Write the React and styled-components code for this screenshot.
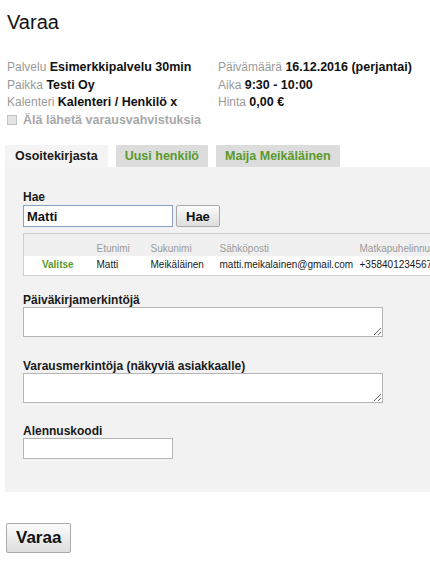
import styled, { createGlobalStyle } from "styled-components";

const GlobalStyle = createGlobalStyle`
  html, body {
    margin: 0;
    padding: 0;
    background: #fff;
    overflow: hidden;
  }
  body {
    font-family: "Liberation Sans", Arial, sans-serif;
    color: #111;
  }
`;

const Page = styled.div`
  width: 430px;
  height: 562px;
  padding-left: 6px;
  box-sizing: border-box;
  overflow: hidden;
`;

const Title = styled.h1`
  margin: 10px 0 0 1px;
  font-size: 20px;
  line-height: 24px;
  font-weight: normal;
  color: #111;
`;

const Info = styled.div`
  display: flex;
  margin: 25px 0 0 1px;
  font-size: 12px;
  line-height: 17.5px;
`;

const Col = styled.div`
  width: ${(p) => p.width || "auto"};
  flex-shrink: 0;
`;

const Row = styled.div`
  white-space: nowrap;
`;

const Label = styled.span`
  color: #9a9a9a;
`;

const Value = styled.b`
  color: #111;
  font-size: 12.5px;
`;

const CheckRow = styled.div`
  display: flex;
  align-items: center;
  gap: 6px;
  color: #a8a8a8;
  font-weight: bold;
  font-size: 12.5px;
  white-space: nowrap;
`;

const FakeCheck = styled.span`
  width: 8px;
  height: 8px;
  border: 1px solid #c4c4c4;
  background: #e4e4e4;
`;

const Tabs = styled.div`
  display: flex;
  gap: 8px;
  margin: 16px 0 0 -1px;
`;

const Tab = styled.div`
  height: 22px;
  line-height: 22px;
  padding: 0 ${(p) => (p.active ? 10 : 9)}px;
  font-size: 12.5px;
  font-weight: bold;
  color: ${(p) => (p.active ? "#1a1a1a" : "#5a9a2c")};
  background: ${(p) => (p.active ? "#f4f4f4" : "#dcdcdc")};
  white-space: nowrap;
`;

const Panel = styled.div`
  margin-left: -1px;
  width: 460px;
  background: #f2f2f2;
  padding: 23px 0 33px 18px;
  box-sizing: border-box;
`;

const FieldLabel = styled.div`
  font-size: 12px;
  line-height: 14px;
  font-weight: bold;
  color: #1a1a1a;
  margin-top: ${(p) => p.gap || 0}px;
`;

const SearchRow = styled.div`
  display: flex;
  align-items: center;
  gap: 3px;
  margin-top: 1px;
`;

const TextInput = styled.input`
  width: ${(p) => p.w || 150}px;
  height: ${(p) => p.h || 22}px;
  box-sizing: border-box;
  border: 1px solid ${(p) => (p.focused ? "#86a3c2" : "#b5b5b5")};
  background: #fff;
  padding: 0 3px;
  margin: 0;
  font-family: "Liberation Sans", Arial, sans-serif;
  font-size: 13px;
  font-weight: bold;
  color: #111;
  outline: none;
`;

const Button = styled.button`
  height: ${(p) => p.h || 22}px;
  padding: 0 ${(p) => p.px || 9}px;
  border: 1px solid #a9a9a9;
  border-radius: 2px;
  background: linear-gradient(#fbfbfb, #dedede);
  font-family: "Liberation Sans", Arial, sans-serif;
  font-size: ${(p) => p.size || 13}px;
  font-weight: bold;
  color: #111;
  margin: 0;
`;

const Table = styled.table`
  margin-top: 6px;
  border-collapse: collapse;
  table-layout: fixed;
  width: 440px;
  border: 1px solid #cfcfcf;
  border-right: none;
  font-size: 10px;
`;

const Th = styled.th`
  text-align: left;
  font-weight: normal;
  color: #9a9a9a;
  background: #f0f0f0;
  padding: 9px 5px 1px;
  line-height: 12px;
  white-space: nowrap;
  overflow: hidden;
`;

const Td = styled.td`
  background: #fff;
  padding: 3px 5px 4px;
  line-height: 12px;
  color: #1a1a1a;
  white-space: nowrap;
  overflow: hidden;
  text-align: ${(p) => (p.center ? "center" : "left")};
`;

const SelectLink = styled.span`
  color: #5a9a2c;
  font-weight: bold;
`;

const TextArea = styled.textarea`
  display: block;
  width: 360px;
  height: 30px;
  box-sizing: border-box;
  margin: 0;
  border: 1px solid #b5b5b5;
  background: #fff;
  resize: both;
`;

const Submit = styled.div`
  margin-top: 31px;
`;

export default function App() {
  return (
    <Page>
      <GlobalStyle />
      <Title>Varaa</Title>
      <Info>
        <Col width="211px">
          <Row>
            <Label>Palvelu</Label> <Value>Esimerkkipalvelu 30min</Value>
          </Row>
          <Row>
            <Label>Paikka</Label> <Value>Testi Oy</Value>
          </Row>
          <Row>
            <Label>Kalenteri</Label> <Value>Kalenteri / Henkilö x</Value>
          </Row>
          <CheckRow>
            <FakeCheck />
            Älä lähetä varausvahvistuksia
          </CheckRow>
        </Col>
        <Col>
          <Row>
            <Label>Päivämäärä</Label> <Value>16.12.2016 (perjantai)</Value>
          </Row>
          <Row>
            <Label>Aika</Label> <Value>9:30 - 10:00</Value>
          </Row>
          <Row>
            <Label>Hinta</Label> <Value>0,00 €</Value>
          </Row>
        </Col>
      </Info>

      <Tabs>
        <Tab active>Osoitekirjasta</Tab>
        <Tab>Uusi henkilö</Tab>
        <Tab>Maija Meikäläinen</Tab>
      </Tabs>

      <Panel>
        <FieldLabel>Hae</FieldLabel>
        <SearchRow>
          <TextInput focused defaultValue="Matti" />
          <Button>Hae</Button>
        </SearchRow>

        <Table>
          <colgroup>
            <col style={{ width: 68 }} />
            <col style={{ width: 54 }} />
            <col style={{ width: 69 }} />
            <col style={{ width: 140 }} />
            <col style={{ width: 109 }} />
          </colgroup>
          <thead>
            <tr>
              <Th />
              <Th>Etunimi</Th>
              <Th>Sukunimi</Th>
              <Th>Sähköposti</Th>
              <Th>Matkapuhelinnumero</Th>
            </tr>
          </thead>
          <tbody>
            <tr>
              <Td center>
                <SelectLink>Valitse</SelectLink>
              </Td>
              <Td>Matti</Td>
              <Td>Meikäläinen</Td>
              <Td>matti.meikalainen@gmail.com</Td>
              <Td>+358401234567</Td>
            </tr>
          </tbody>
        </Table>

        <FieldLabel gap={17}>Päiväkirjamerkintöjä</FieldLabel>
        <TextArea />

        <FieldLabel gap={22}>Varausmerkintöja (näkyviä asiakkaalle)</FieldLabel>
        <TextArea />

        <FieldLabel gap={21}>Alennuskoodi</FieldLabel>
        <TextInput w={150} h={21} />
      </Panel>

      <Submit>
        <Button h={30} px={9} size={17}>
          Varaa
        </Button>
      </Submit>
    </Page>
  );
}
